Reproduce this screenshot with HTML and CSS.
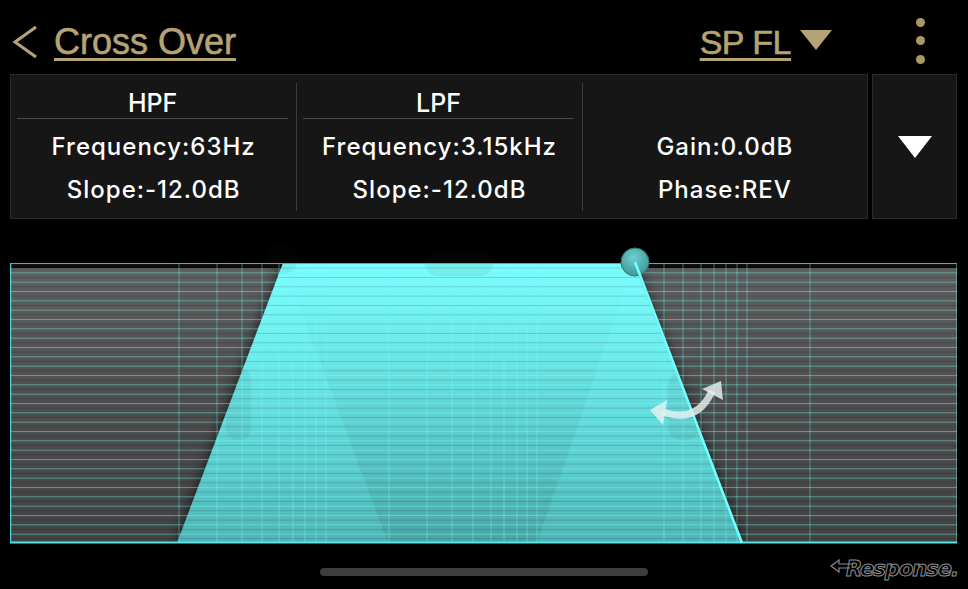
FILE: index.html
```html
<!doctype html>
<html>
<head>
<meta charset="utf-8">
<meta name="viewport" content="width=device-width, initial-scale=1.0">
<link rel="stylesheet" href="styles.css">
<title>Cross Over</title>
</head>
<body>
<div class="screen">

<header class="topbar">
    <a class="back" href="#">
        <svg width="26" height="34" viewBox="0 0 26 34"><polyline points="24,2 3,17 24,32" /></svg>
    </a>
    <h1 class="title">Cross Over</h1>
    <div class="speaker">
        <span class="speaker-name">SP FL</span>
        <span class="speaker-caret"></span>
    </div>
    <div class="more"><i></i><i></i><i></i></div>
</header>

<section class="controls">
    <div class="filters">
        <div class="filter">
            <div class="filter-title">HPF</div>
            <div class="filter-row first">Frequency:63Hz</div>
            <div class="filter-row">Slope:-12.0dB</div>
        </div>
        <div class="filter">
            <div class="filter-title">LPF</div>
            <div class="filter-row first">Frequency:3.15kHz</div>
            <div class="filter-row">Slope:-12.0dB</div>
        </div>
        <div class="filter filter-plain">
            <div class="filter-row">Gain:0.0dB</div>
            <div class="filter-row">Phase:REV</div>
        </div>
    </div>
    <button class="expand"><span class="expand-caret"></span></button>
</section>

<div class="graph">
<svg viewBox="10 245 948 300" width="948" height="300">
    <defs>
        <linearGradient id="greyBg" gradientUnits="userSpaceOnUse" x1="0" y1="268" x2="0" y2="543">
            <stop offset="0" stop-color="#5e5e5e" />
            <stop offset="0.5" stop-color="#4d4d4d" />
            <stop offset="1" stop-color="#424242" />
        </linearGradient>
        <linearGradient id="band" gradientUnits="userSpaceOnUse" x1="0" y1="263" x2="0" y2="543">
            <stop offset="0" stop-color="#7bfefe" />
            <stop offset="0.35" stop-color="#6debeb" />
            <stop offset="0.7" stop-color="#5dcfcf" />
            <stop offset="1" stop-color="#51b4b4" />
        </linearGradient>
        <linearGradient id="inner" gradientUnits="userSpaceOnUse" x1="0" y1="263" x2="0" y2="543">
            <stop offset="0" stop-color="#000" stop-opacity="0" />
            <stop offset="1" stop-color="#000" stop-opacity="0.08" />
        </linearGradient>
        <radialGradient id="knob" cx="0.45" cy="0.35" r="0.7">
            <stop offset="0" stop-color="#6fcfcf" />
            <stop offset="1" stop-color="#3a9494" />
        </radialGradient>
        <pattern id="rows" patternUnits="userSpaceOnUse" x="0" y="263" width="20" height="9.333">
            <rect x="0" y="0" width="20" height="1" fill="rgba(110,250,250,0.45)" />
            <rect x="0" y="4.6" width="20" height="1" fill="rgba(0,0,0,0.15)" />
        </pattern>
        <filter id="shade" x="-20%" y="-20%" width="140%" height="140%">
            <feDropShadow dx="0" dy="0" stdDeviation="7" flood-color="#000" flood-opacity="0.75" />
        </filter>
    </defs>

    <!-- background -->
    <rect x="10" y="263" width="947" height="280" fill="#0c0c0c" />
    <rect x="10" y="268" width="947" height="275" fill="url(#greyBg)" />

    <!-- pass band -->
    <polygon points="283,263 634,263 742,543 177,543" fill="url(#band)" filter="url(#shade)" />
    <polygon points="283,263 634,263 537,543 388,543" fill="url(#inner)" />

    <!-- ghost handles -->
    <g fill="#333" opacity="0.07">
        <circle cx="283" cy="259" r="15" />
        <rect x="425" y="250" width="68" height="26" rx="13" />
        <rect x="226" y="368" width="25" height="72" rx="12" />
        <rect x="668" y="372" width="32" height="68" rx="14" />
    </g>

    <!-- grid -->
    <rect x="10" y="263" width="947" height="280" fill="url(#rows)" />
    <path class="grid-v" d="M179 263V543M217 263V543M242 263V543M262 263V543M279 263V543M293 263V543M305 263V543M316 263V543M326 263V543M389 263V543M427 263V543M452 263V543M473 263V543M491 263V543M504 263V543M517 263V543M527 263V543M537 263V543M664 263V543M683 263V543M701 263V543M714 263V543M726 263V543M737 263V543M747 263V543M810 263V543M956.5 263V543" />

    <!-- frame -->
    <path d="M10 263.5H957" stroke="#3fb7bb" stroke-width="1" />
    <path d="M10 542.5H957" stroke="#58e3e6" stroke-width="2" />
    <path d="M10.5 263V543" stroke="#4fd3d6" stroke-width="1.5" />

    <!-- handle + active slope -->
    <circle cx="635" cy="262" r="14" fill="url(#knob)" stroke="#2b7474" stroke-width="1" />
    <path d="M635 262L742 543" stroke="#72ffff" stroke-width="2.5" />

    <!-- rotate hint -->
    <g fill="rgba(232,240,240,0.82)">
        <path d="M663 412 Q 697 424 712 391" fill="none" stroke="rgba(232,240,240,0.82)" stroke-width="7" />
        <polygon points="650,410 667,400 663,425" />
        <polygon points="721,381 702,389 723,400" />
    </g>
</svg>
</div>

<footer class="bottom">
    <span class="home-bar"></span>
    <span class="brand">
        <svg width="24" height="14" viewBox="0 0 24 14"><path d="M23 5H9V1L1 7l8 6V9h11" /></svg>
        <span class="brand-name">Response.</span>
    </span>
</footer>

</div>
</body>
</html>
```

FILE: styles.css
```css
html,
body {
    margin: 0;
    padding: 0;
}
body {
    background-color: #000;
    color: #fff;
    font-family: Inter, "Noto Sans", sans-serif;
}
.screen {
    width: 968px;
    height: 589px;
    overflow: hidden;
}

/* top bar */
.topbar {
    display: flex;
    align-items: center;
    height: 64px;
    padding: 10px 43px 0 12px;
    color: #b6a375;
    font-family: "Liberation Sans", Arial, sans-serif;
}
.back {
    display: block;
    width: 26px;
    height: 34px;
    margin-right: 16px;
}
.back svg {
    display: block;
}
.back polyline {
    fill: none;
    stroke: #b6a375;
    stroke-width: 3;
}
.title {
    margin: 0;
    font-size: 36px;
    font-weight: normal;
    line-height: 40px;
    text-decoration: underline;
    text-decoration-thickness: 3px;
    text-underline-offset: 4px;
    -webkit-text-stroke: 0.6px #b6a375;
}
.speaker {
    display: flex;
    align-items: center;
    margin-left: auto;
}
.speaker-name {
    font-size: 34px;
    line-height: 40px;
    letter-spacing: -0.5px;
    text-decoration: underline;
    text-decoration-thickness: 3px;
    text-underline-offset: 4px;
    -webkit-text-stroke: 0.6px #b6a375;
}
.speaker-caret {
    width: 0;
    height: 0;
    margin: -4px 0 0 9px;
    border-left: 16px solid transparent;
    border-right: 16px solid transparent;
    border-top: 20px solid #b6a375;
}
.more {
    display: flex;
    flex-direction: column;
    gap: 9.5px;
    margin: -3px 0 0 84px;
}
.more i {
    display: block;
    width: 9px;
    height: 9px;
    border-radius: 50%;
    background-color: #ab9869;
}

/* filter panel */
.controls {
    display: flex;
    gap: 4px;
    height: 145px;
    margin: 0 11px 0 10px;
}
.filters {
    flex: 1;
    display: grid;
    grid-template-columns: repeat(3, 1fr);
    padding: 8px 0;
    background-color: #161616;
    border: 1px solid #2a2a2a;
}
.filter {
    text-align: center;
}
.filter + .filter {
    border-left: 1px solid #3c3c3c;
}
.filter-title {
    margin: 5px 8px 0 6px;
    font-size: 25px;
    font-weight: 500;
    line-height: 30px;
    border-bottom: 1px solid #4a4a4a;
}
.filter-row {
    font-size: 24px;
    font-weight: 500;
    line-height: 43px;
    letter-spacing: 1px;
}
.filter-row.first {
    margin-top: 6px;
}
.filter-plain {
    padding-top: 42px;
}
.expand {
    display: flex;
    align-items: center;
    justify-content: center;
    width: 85px;
    padding: 0;
    background-color: #161616;
    border: 1px solid #2a2a2a;
}
.expand-caret {
    width: 0;
    height: 0;
    border-left: 17px solid transparent;
    border-right: 17px solid transparent;
    border-top: 22px solid #fff;
}

/* graph */
.graph {
    margin: 26px 0 0 10px;
    height: 300px;
}
.graph svg {
    display: block;
}
.grid-v {
    fill: none;
    stroke: rgba(110, 250, 250, 0.42);
    stroke-width: 1;
}

/* bottom */
.bottom {
    position: relative;
    height: 44px;
    display: flex;
    justify-content: center;
    padding-top: 23px;
    box-sizing: border-box;
}
.home-bar {
    width: 328px;
    height: 8px;
    border-radius: 4px;
    background-color: #3d3d3d;
}
.brand {
    position: absolute;
    right: 10px;
    bottom: 8px;
    display: flex;
    align-items: flex-start;
}
.brand svg {
    margin: 2px -8px 0 0;
}
.brand svg path {
    fill: none;
    stroke: #8a8a8a;
    stroke-width: 1.2;
}
.brand-name {
    font-family: "DejaVu Sans", sans-serif;
    font-size: 21px;
    font-weight: bold;
    font-style: italic;
    line-height: 24px;
    letter-spacing: -1px;
    color: transparent;
    -webkit-text-stroke: 1px #8e8e8e;
}
```
